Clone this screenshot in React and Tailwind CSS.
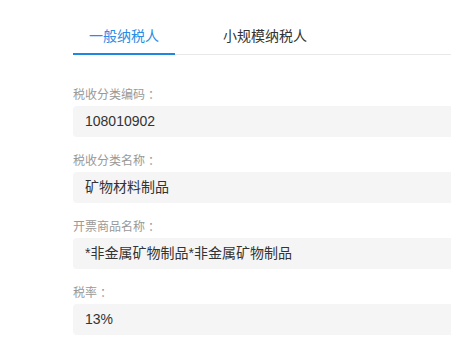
import React, { useState } from "react";

const fields = [
  { label: "税收分类编码", value: "108010902" },
  { label: "税收分类名称", value: "矿物材料制品" },
  { label: "开票商品名称", value: "*非金属矿物制品*非金属矿物制品" },
  { label: "税率", value: "13%" },
];

const App = () => {
  const [tab, setTab] = useState(0);
  const tabs = ["一般纳税人", "小规模纳税人"];

  return (
    <div
      className="w-[451px] h-[344px] bg-white overflow-hidden pl-[73px]"
      style={{ fontFamily: '"Liberation Sans", "Noto Sans CJK SC", sans-serif' }}
    >
      <div className="flex flex-row items-end h-[55px] border-b border-[#e8e8e8]">
        {tabs.map((t, i) => (
          <div
            key={t}
            onClick={() => setTab(i)}
            className={
              i == 0
                ? "cursor-pointer h-[29px] w-[102px] flex justify-center text-[14px] leading-[20px] -mb-px border-b-2 " +
                  (tab == 0 ? "border-[#1e88e0] text-[#2a8ce4]" : "border-transparent text-[#333]")
                : "cursor-pointer h-[29px] pl-[48px] pr-4 flex justify-center text-[14px] leading-[20px] -mb-px border-b-2 " +
                  (tab == 1 ? "border-[#1e88e0] text-[#2a8ce4]" : "border-transparent text-[#333]")
            }
          >
            {t}
          </div>
        ))}
      </div>
      <div className="flex flex-col pt-[32px] gap-[16px]">
        {fields.map((f) => (
          <div key={f.label} className="flex flex-col">
            <div className="h-[16px] flex items-center text-[12px] leading-[16px] text-[#999] mb-[3px]">
              {f.label}
              <span
                className="leading-[16px]"
                style={{ fontFamily: '"Noto Sans CJK JP", sans-serif' }}
              >
                ：
              </span>
            </div>
            <div className="h-[31px] rounded-l-[4px] bg-[#f5f5f5] flex items-center px-3 text-[14px] text-[#333]">
              {f.value}
            </div>
          </div>
        ))}
      </div>
    </div>
  );
};

export default App;
